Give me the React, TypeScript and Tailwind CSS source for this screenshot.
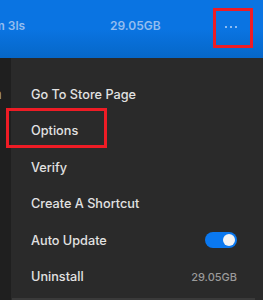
import React from "react";

const items = ["Go To Store Page", "Options", "Verify", "Create A Shortcut"];

function Toggle() {
  return (
    <div className="w-[32px] h-[16px] rounded-full bg-[#0a78f0] flex items-center justify-end pr-[2px]">
      <div className="w-[12px] h-[12px] rounded-full bg-[#f4f4f4]" />
    </div>
  );
}

export default function App() {
  return (
    <div
      className="relative w-[263px] h-[300px] overflow-hidden bg-[#1f1f1f] text-[#e2e2e2]"
      style={{ fontFamily: "Inter, 'Noto Sans', sans-serif" }}
    >
      {/* game row */}
      <div className="h-[58px] bg-gradient-to-b from-[#0a74e2] via-[#0a74e2] to-[#0667c8] flex items-center pb-[6px] text-[12px] font-semibold text-[#94bdee]">
        <span className="w-[116px] -ml-[6px]">m 3ls</span>
        <span>29.05GB</span>
        <div className="ml-auto w-[40px] flex justify-center gap-[3px] mr-[12px] pt-[1px]">
          <span className="w-[2px] h-[2px] bg-[#8cbcf3]" />
          <span className="w-[2px] h-[2px] bg-[#8cbcf3]" />
          <span className="w-[2px] h-[2px] bg-[#8cbcf3]" />
        </div>
      </div>

      <div className="flex h-[242px]">
        <div className="w-[11px] overflow-hidden text-[13px] pt-[27px] text-[#a8a8a8]">
          <span className="-ml-[6px]">n</span>
        </div>
        <div className="flex-1 bg-[#2a2a2a] flex flex-col pt-[18px] text-[12.7px] font-medium">
          {items.map((label) => (
            <div key={label} className="h-[36.5px] flex items-center pl-[20px]">
              {label}
            </div>
          ))}
          <div className="h-[36.5px] flex items-center pl-[20px] pr-[26px] justify-between">
            <span>Auto Update</span>
            <Toggle />
          </div>
          <div className="h-[36.5px] flex items-center pl-[20px] pr-[26px] justify-between">
            <span>Uninstall</span>
            <span className="text-[11px] text-[#9a9a9a]">29.05GB</span>
          </div>
          <div className="mt-auto h-[2px] mr-[8px] ml-[1px] bg-[#3a3a3a]" />
        </div>
      </div>

      {/* annotation boxes */}
      <div className="absolute left-[213px] top-[8px] w-[40px] h-[40px] border-[3px] border-[#ee1c25]" />
      <div className="absolute left-[6px] top-[108px] w-[101px] h-[40px] border-[3px] border-[#ee1c25]" />
    </div>
  );
}
